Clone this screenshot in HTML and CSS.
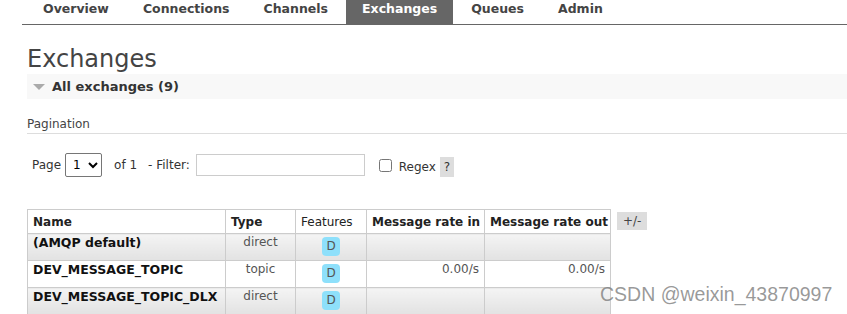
FILE: index.html
```html
<!DOCTYPE html>
<html lang="en">

<head>
    <meta charset="UTF-8">
    <meta name="viewport" content="width=device-width, initial-scale=1.0">
    <title>Exchanges</title>
    <link rel="stylesheet" href="styles.css">
</head>

<body>
    <ul class="tabs">
        <li><a href="#">Overview</a></li>
        <li><a href="#">Connections</a></li>
        <li><a href="#">Channels</a></li>
        <li class="selected"><a href="#">Exchanges</a></li>
        <li><a href="#">Queues</a></li>
        <li><a href="#">Admin</a></li>
    </ul>

    <div class="main">
        <h1>Exchanges</h1>
        <div class="section">
            <h2><span class="arrow"></span>All exchanges (9)</h2>
        </div>

        <h3 class="pagination-title">Pagination</h3>

        <div class="filter">
            <span>Page</span>
            <select class="page-select">
                <option>1</option>
            </select>
            <span class="of">of 1</span>
            <span>- Filter:</span>
            <input type="text" class="filter-input">
            <input type="checkbox" class="regex-box" id="regex">
            <label for="regex">Regex</label>
            <span class="help">?</span>
        </div>

        <div class="table-wrap">
            <table class="list">
                <thead>
                    <tr>
                        <th class="c-name">Name</th>
                        <th class="c-type">Type</th>
                        <th class="c-feat">Features</th>
                        <th class="c-in">Message rate in</th>
                        <th class="c-out">Message rate out</th>
                    </tr>
                </thead>
                <tbody>
                    <tr class="alt">
                        <td class="name">(AMQP default)</td>
                        <td class="center">direct</td>
                        <td class="center"><span class="badge">D</span></td>
                        <td class="num"></td>
                        <td class="num"></td>
                    </tr>
                    <tr>
                        <td class="name">DEV_MESSAGE_TOPIC</td>
                        <td class="center">topic</td>
                        <td class="center"><span class="badge">D</span></td>
                        <td class="num">0.00/s</td>
                        <td class="num">0.00/s</td>
                    </tr>
                    <tr class="alt">
                        <td class="name">DEV_MESSAGE_TOPIC_DLX</td>
                        <td class="center">direct</td>
                        <td class="center"><span class="badge">D</span></td>
                        <td class="num"></td>
                        <td class="num"></td>
                    </tr>
                </tbody>
            </table>
            <span class="toggle">+/-</span>
        </div>
    </div>

    <div class="watermark">CSDN @weixin_43870997</div>
</body>

</html>
```

FILE: styles.css
```css
* {
    margin: 0;
    padding: 0;
    box-sizing: border-box;
}

body {
    font-family: "DejaVu Sans", Verdana, sans-serif;
    font-size: 12px;
    color: #444;
    background-color: white;
    position: relative;
    height: 314px;
    overflow: hidden;
}

.tabs {
    list-style: none;
    display: flex;
    margin-left: 22px;
    height: 25px;
    border-bottom: 1px solid #666;
    padding-left: 5px;
}

.tabs li {
    margin-right: 2px;
}

.tabs li a {
    display: block;
    height: 24px;
    padding: 0 16px;
    line-height: 18px;
    font-weight: bold;
    font-size: 12.5px;
    color: #444;
    text-decoration: none;
}

.tabs li.selected a {
    background-color: #666;
    color: white;
}

.main {
    padding-left: 27px;
}

h1 {
    font-weight: normal;
    font-size: 24px;
    line-height: 30px;
    margin-top: 19px;
    color: #444;
}

.section h2 {
    background-color: #f8f8f8;
    height: 25px;
    display: flex;
    align-items: center;
    font-size: 13px;
    font-weight: bold;
    color: #333;
    padding-left: 6px;
}

.arrow {
    width: 0;
    height: 0;
    border-left: 6px solid transparent;
    border-right: 6px solid transparent;
    border-top: 6px solid #aaa;
    margin-right: 7px;
}

.pagination-title {
    font-weight: normal;
    font-size: 12px;
    margin-top: 18px;
    padding-bottom: 1px;
    border-bottom: 1px solid #ddd;
    line-height: 15px;
}

.filter {
    display: flex;
    align-items: center;
    margin-top: 19px;
    padding-left: 5px;
    height: 24px;
    color: #333;
}

.page-select {
    margin-left: 4px;
    width: 37px;
    height: 24px;
    font-family: "DejaVu Sans", sans-serif;
    font-size: 12px;
    border: 1px solid #767676;
    border-radius: 2px;
    background: white;
    padding-left: 3px;
}

.of {
    margin-left: 12px;
    margin-right: 11px;
}

.filter-input {
    margin-left: 6px;
    width: 169px;
    height: 22px;
    border: 1px solid #ccc;
}

.regex-box {
    margin-left: 14px;
    width: 13px;
    height: 13px;
}

.filter label {
    margin-left: 7px;
    margin-top: 4px;
}

.help {
    margin-left: 4px;
    margin-top: 4px;
    background-color: #ddd;
    padding: 2px 4px;
    line-height: 16px;
}

.table-wrap {
    display: flex;
    align-items: flex-start;
    margin-top: 32px;
}

.list {
    border-collapse: collapse;
    border: 1px solid #ccc;
    color: #222;
    table-layout: fixed;
    width: 583px;
}

.list th {
    height: 24px;
    text-align: left;
    padding: 1px 5px 0;
    border: 1px solid #ccc;
    font-size: 12px;
    color: #222;
    vertical-align: middle;
    white-space: nowrap;
}

.list th.c-feat {
    font-weight: normal;
}

.c-name { width: 198px; }
.c-type { width: 70px; }
.c-feat { width: 71px; }
.c-in { width: 118px; }
.c-out { width: 126px; }

.list td {
    height: 27px;
    padding: 1px 5px;
    border-left: 1px solid #ccc;
    border-right: 1px solid #ccc;
    border-top: 1px solid #ccc;
    vertical-align: top;
    color: #555;
    white-space: nowrap;
}

.list tr.alt td {
    background: linear-gradient(#f4f4f4, #e2e2e2);
}

.list td.name {
    font-weight: bold;
    font-size: 12.5px;
    color: #111;
}

.list td.center {
    text-align: center;
}

.list td.num {
    text-align: right;
}

.badge {
    display: inline-block;
    background-color: #8ee0fb;
    color: #555;
    border-radius: 4px;
    width: 18px;
    height: 19px;
    line-height: 19px;
    text-align: center;
    margin-top: 2px;
}

.toggle {
    margin-left: 6px;
    margin-top: 3px;
    background-color: #ddd;
    padding: 0 6px;
    line-height: 18px;
    color: #444;
}

.watermark {
    position: absolute;
    left: 600px;
    top: 283px;
    font-family: "Liberation Sans", Arial, sans-serif;
    font-size: 19.5px;
    color: rgba(120, 120, 120, 0.75);
    white-space: nowrap;
}
```
